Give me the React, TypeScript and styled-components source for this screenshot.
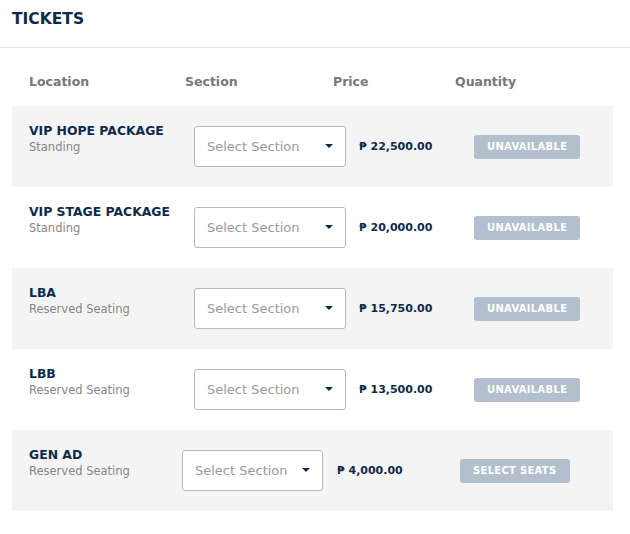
import React from "react";
import styled, { createGlobalStyle } from "styled-components";

interface TicketTypes {
  name: string;
  kind: string;
  price: string;
  action: string;
  cols: string;
  selectWidth: number;
}

const tickets: TicketTypes[] = [
  { name: "VIP HOPE PACKAGE", kind: "Standing", price: "22,500.00", action: "UNAVAILABLE", cols: "165px 165px 115px 1fr", selectWidth: 152 },
  { name: "VIP STAGE PACKAGE", kind: "Standing", price: "20,000.00", action: "UNAVAILABLE", cols: "165px 165px 115px 1fr", selectWidth: 152 },
  { name: "LBA", kind: "Reserved Seating", price: "15,750.00", action: "UNAVAILABLE", cols: "165px 165px 115px 1fr", selectWidth: 152 },
  { name: "LBB", kind: "Reserved Seating", price: "13,500.00", action: "UNAVAILABLE", cols: "165px 165px 115px 1fr", selectWidth: 152 },
  { name: "GEN AD", kind: "Reserved Seating", price: "4,000.00", action: "SELECT SEATS", cols: "153px 155px 123px 1fr", selectWidth: 141 },
];

const GlobalStyle = createGlobalStyle`
  body {
    margin: 0;
    background: #fff;
    font-family: "DejaVu Sans", "Noto Sans", sans-serif;
  }
`;

const PageStyled = styled.div`
  width: 630px;
`;

const TitleBarStyled = styled.div`
  height: 48px;
  padding: 10px 12px 0;
  box-sizing: border-box;
  border-bottom: 1px solid #e4e4e4;
`;

const TitleStyled = styled.h2`
  margin: 0;
  font-size: 15.5px;
  line-height: 18px;
  font-weight: 700;
  color: #0d2a4d;
`;

const TableStyled = styled.div`
  margin: 0 17px 0 12px;
`;

const HeadRowStyled = styled.div`
  display: grid;
  grid-template-columns: 156px 148px 122px 1fr;
  align-items: center;
  height: 58px;
  box-sizing: border-box;
  padding: 8px 0 0 17px;
`;

const HeadCellStyled = styled.div`
  font-size: 12.5px;
  font-weight: 700;
  color: #777;
`;

const RowStyled = styled.div<{ $cols: string; $striped: boolean }>`
  display: grid;
  grid-template-columns: ${(p) => p.$cols};
  align-items: center;
  height: 81px;
  padding-left: 17px;
  background: ${(p) => (p.$striped ? "#f4f4f4" : "#fff")};
`;

const LocationStyled = styled.div`
  align-self: start;
  padding-top: 17px;
`;

const NameStyled = styled.div`
  font-size: 12.4px;
  line-height: 16px;
  font-weight: 700;
  color: #0d2a4d;
`;

const KindStyled = styled.div`
  font-size: 11.5px;
  line-height: 16px;
  color: #868686;
`;

const SelectStyled = styled.div<{ $width: number }>`
  position: relative;
  display: flex;
  align-items: center;
  width: ${(p) => p.$width}px;
  height: 41px;
  box-sizing: border-box;
  padding-left: 12px;
  background: #fff;
  border: 1px solid #b9b9b9;
  border-radius: 3px;
  font-size: 13px;
  color: #9a9a9a;
`;

const ArrowStyled = styled.span`
  position: absolute;
  right: 12px;
  top: 17px;
  width: 0;
  height: 0;
  border-left: 4px solid transparent;
  border-right: 4px solid transparent;
  border-top: 4px solid #0d2a4d;
`;

const PriceStyled = styled.div`
  font-size: 11px;
  font-weight: 700;
  color: #0d2a4d;
`;

const ActionStyled = styled.button`
  justify-self: start;
  height: 24px;
  padding: 0 13px;
  border: none;
  border-radius: 3px;
  background: #b3bfcd;
  color: #fff;
  font-family: inherit;
  font-size: 10px;
  font-weight: 700;
  letter-spacing: 0.3px;
`;

const App: React.FC = () => {
  return (
    <PageStyled>
      <GlobalStyle />
      <TitleBarStyled>
        <TitleStyled>TICKETS</TitleStyled>
      </TitleBarStyled>
      <TableStyled>
        <HeadRowStyled>
          <HeadCellStyled>Location</HeadCellStyled>
          <HeadCellStyled>Section</HeadCellStyled>
          <HeadCellStyled>Price</HeadCellStyled>
          <HeadCellStyled>Quantity</HeadCellStyled>
        </HeadRowStyled>
        {tickets.map((ticket, index) => (
          <RowStyled key={ticket.name} $cols={ticket.cols} $striped={index % 2 === 0}>
            <LocationStyled>
              <NameStyled>{ticket.name}</NameStyled>
              <KindStyled>{ticket.kind}</KindStyled>
            </LocationStyled>
            <div>
              <SelectStyled $width={ticket.selectWidth}>
                Select Section
                <ArrowStyled />
              </SelectStyled>
            </div>
            <PriceStyled>₱ {ticket.price}</PriceStyled>
            <ActionStyled>{ticket.action}</ActionStyled>
          </RowStyled>
        ))}
      </TableStyled>
    </PageStyled>
  );
};

export default App;
